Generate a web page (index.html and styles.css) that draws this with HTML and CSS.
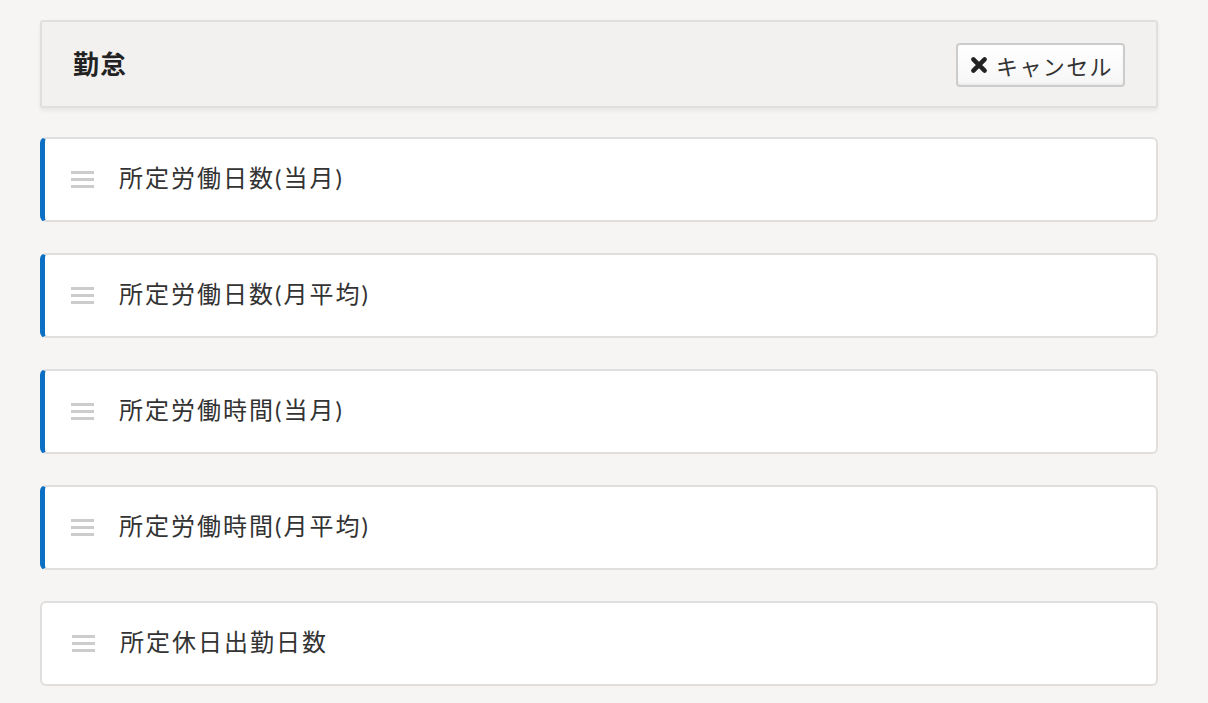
FILE: index.html
```html
<!doctype html>
<html>
<head>
<meta charset="utf-8">
<title>勤怠</title>
<link rel="stylesheet" href="styles.css">
</head>
<body>
	<div class="wrap">
		<div class="head">
			<h2>勤怠</h2>
			<a href="javascript:;" class="btn-cancel">
				<svg width="18" height="18" viewBox="0 0 16 16"><path d="M3 3 L13 13 M13 3 L3 13" stroke="#222" stroke-width="4" stroke-linecap="round"/></svg>
				キャンセル
			</a>
		</div>
		<ul class="list">
			<li class="item on"><span class="grip"><i></i><i></i><i></i></span><span class="txt">所定労働日数(当月)</span></li>
			<li class="item on"><span class="grip"><i></i><i></i><i></i></span><span class="txt">所定労働日数(月平均)</span></li>
			<li class="item on"><span class="grip"><i></i><i></i><i></i></span><span class="txt">所定労働時間(当月)</span></li>
			<li class="item on"><span class="grip"><i></i><i></i><i></i></span><span class="txt">所定労働時間(月平均)</span></li>
			<li class="item"><span class="grip"><i></i><i></i><i></i></span><span class="txt">所定休日出勤日数</span></li>
		</ul>
	</div>
</body>
</html>
```

FILE: styles.css
```css
*{margin:0; padding:0; list-style:none; box-sizing:border-box;}
body{background:#f6f5f3; font-family:"Lato","Noto Sans CJK JP",sans-serif; color:#333;}
.wrap{width:1118px; margin:20px 0 0 40px;}
.head{height:88px; background:#f2f1ef; border:2px solid #e0dfdd; border-radius:3px; box-shadow:0 3px 4px rgba(0,0,0,0.06); display:flex; align-items:center; justify-content:space-between; padding:0 31px 0 31px;}
.head h2{font-size:26px; line-height:1; font-weight:bold; color:#222; letter-spacing:1px; margin-top:-1px;}
.btn-cancel{height:44px; margin-top:2px; display:flex; align-items:center; gap:8px; padding:0 10px 0 12px; background:linear-gradient(#fff,#f6f6f6); border:2px solid #ccc; border-radius:4px; font-size:22px; color:#333; text-decoration:none; letter-spacing:1.4px; box-shadow:inset 0 -2px 2px rgba(0,0,0,0.04);}
.list{margin-top:29px;}
.item{height:85px; margin-bottom:31px; background:#fff; border:2px solid #e0dfdd; border-radius:6px; display:flex; align-items:center; padding-left:30px; font-size:24px; color:#333;}
.item.on{border-left:5px solid #0b6fc4; padding-left:26px;}
.txt{letter-spacing:2px; line-height:1; margin-top:-4px;}
.grip{width:23px; display:flex; flex-direction:column; gap:4px; margin-right:25px;}
.grip i{display:block; height:3px; background:#cccccc;}
```
